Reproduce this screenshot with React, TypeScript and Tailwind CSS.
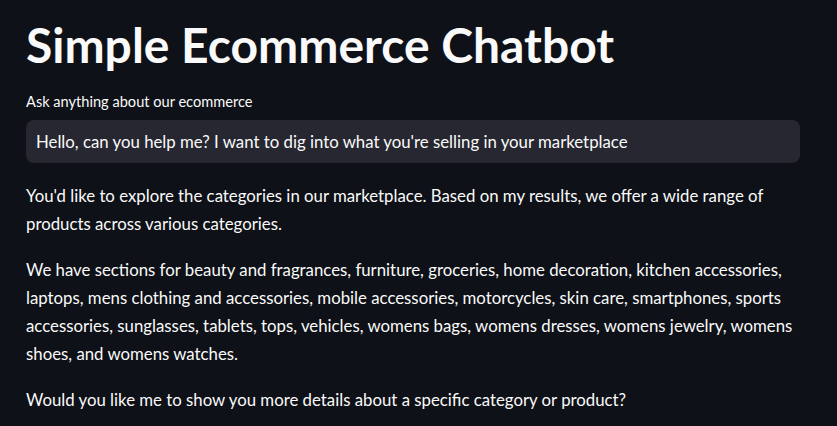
import React from "react";

export default function App() {
  return (
    <div className="min-h-[426px] w-full bg-[#0e1117] text-[#fafafa]" style={{ fontFamily: "Lato, 'Noto Sans', sans-serif" }}>
      <div className="w-[774px] pl-[26px] box-content pt-[16px]">
        <h1 className="text-[48px] font-bold leading-[1.2] tracking-[0px] pb-[17px]">Simple Ecommerce Chatbot</h1>
        <label className="block text-[14.6px] leading-[22.4px] mb-[7px]">Ask anything about our ecommerce</label>
        <div className="h-[43px] rounded-[8px] bg-[#262730] flex items-center px-[10px] text-[16.8px]">
          Hello, can you help me? I want to dig into what you're selling in your marketplace
        </div>
        <div className="mt-[19px] text-[16.8px] leading-[28px] flex flex-col gap-[18px]">
          <p>You'd like to explore the categories in our marketplace. Based on my results, we offer a wide range of products across various categories.</p>
          <p>We have sections for beauty and fragrances, furniture, groceries, home decoration, kitchen accessories, laptops, mens clothing and accessories, mobile accessories, motorcycles, skin care, smartphones, sports accessories, sunglasses, tablets, tops, vehicles, womens bags, womens dresses, womens jewelry, womens shoes, and womens watches.</p>
          <p>Would you like me to show you more details about a specific category or product?</p>
        </div>
      </div>
    </div>
  );
}
